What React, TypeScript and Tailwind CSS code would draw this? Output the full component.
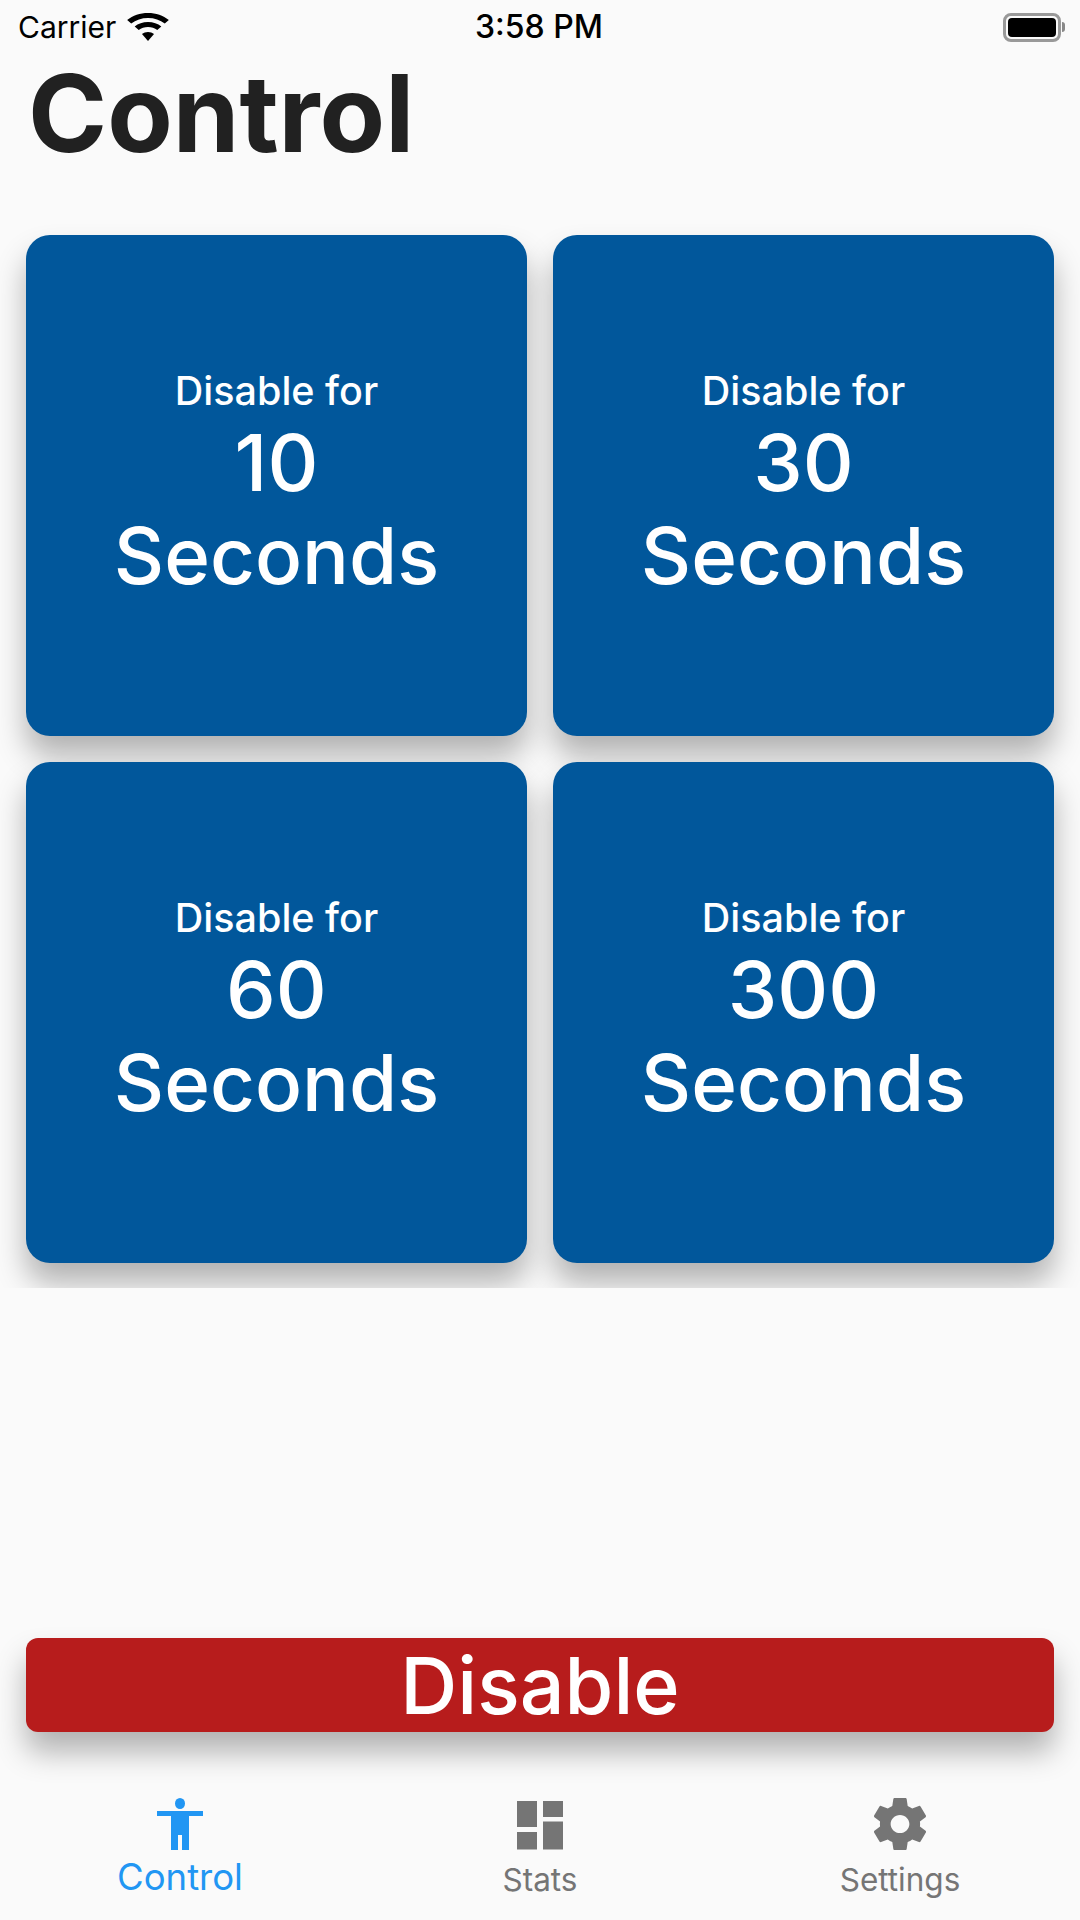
import React from 'react';

const durations = ['10', '30', '60', '300'];

function DisableCard({ value }: { value: string }) {
    return (
        <button className="flex aspect-square flex-col items-center justify-center rounded-[24px] bg-[#01579b] pb-[2px] text-white shadow-[0_20px_30px_rgba(0,0,0,0.29)]">
            <span className="text-[39.500px] leading-[48px] font-medium">Disable for</span>
            <span className="text-[79px] leading-[94px] font-medium">{value}</span>
            <span className="text-[78px] leading-[94px] font-medium">Seconds</span>
        </button>
    );
}

function WifiIcon() {
    return (
        <svg width="44" height="30" viewBox="0 0 38 30" preserveAspectRatio="none" fill="#000">
            <path d="M19 1C12 1 6 3.500 1 8l3.500 3.500C8.500 8 13.500 6 19 6s10.500 2 14.500 5.500L37 8C32 3.500 26 1 19 1z" />
            <path d="M19 10c-4.500 0-8.500 1.600-11.500 4.400L11 18c2.200-1.900 5-3 8-3s5.800 1.100 8 3l3.500-3.600C27.500 11.600 23.500 10 19 10z" />
            <path d="M19 20c-2 0-3.800.7-5.200 2L19 29l5.200-7c-1.400-1.300-3.200-2-5.200-2z" />
        </svg>
    );
}

function BatteryIcon() {
    return (
        <div className="flex items-center">
            <div className="h-[29px] w-[58px] rounded-[8px] border-[3px] border-[#999] bg-[#fafafa] p-[2px]">
                <div className="h-full w-full rounded-[4px] bg-black"></div>
            </div>
            <div className="ml-[1px] h-[10px] w-[3px] rounded-r-full bg-[#888]"></div>
        </div>
    );
}

function ControlIcon() {
    return (
        <svg width="48" height="54" viewBox="0 0 48 54" fill="#2196f3">
            <ellipse cx="24" cy="5.500" rx="5" ry="5.500" />
            <path d="M1 13h46v5H33v34h-7V37h-4v15h-7V18H1z" />
        </svg>
    );
}

function StatsIcon() {
    return (
        <svg width="48" height="50" viewBox="0 0 48 50" fill="#757575">
            <rect x="1" y="1" width="20" height="26" />
            <rect x="27" y="1" width="20" height="16" />
            <rect x="27" y="21.500" width="20" height="28" />
            <rect x="1" y="32" width="20" height="17.500" />
        </svg>
    );
}

function SettingsIcon() {
    return (
        <svg width="52" height="52" viewBox="2.300 2 19.400 20" preserveAspectRatio="none" fill="#757575">
            <path d="M19.430 12.980c.04-.32.07-.64.07-.98s-.03-.66-.07-.98l2.110-1.650c.19-.15.24-.42.12-.64l-2-3.460c-.12-.22-.39-.3-.61-.22l-2.490 1c-.52-.4-1.080-.73-1.690-.98l-.38-2.650C14.460 2.180 14.250 2 14 2h-4c-.25 0-.46.18-.49.42l-.38 2.650c-.61.25-1.170.59-1.690.98l-2.490-1c-.23-.09-.49 0-.61.22l-2 3.460c-.13.22-.07.49.12.64l2.110 1.650c-.04.32-.07.65-.07.98s.03.66.07.98l-2.110 1.650c-.19.15-.24.42-.12.64l2 3.460c.12.22.39.3.61.22l2.490-1c.52.4 1.080.73 1.690.98l.38 2.650c.03.24.24.42.49.42h4c.25 0 .46-.18.49-.42l.38-2.650c.61-.25 1.170-.59 1.690-.98l2.490 1c.23.09.49 0 .61-.22l2-3.460c.12-.22.07-.49-.12-.64l-2.110-1.650zM12 15.500c-1.930 0-3.500-1.570-3.500-3.500s1.570-3.500 3.500-3.500 3.500 1.570 3.500 3.500-1.570 3.500-3.500 3.500z" />
        </svg>
    );
}

export default function App() {
    return (
        <div className="flex h-[1920px] w-[1080px] flex-col overflow-hidden bg-[#fafafa] font-['Inter',sans-serif]">
            {/* status bar */}
            <div className="flex h-[54px] shrink-0 items-center justify-between pr-[15px] pl-[18px]">
                <div className="flex w-[300px] items-center gap-[10px]">
                    <span className="text-[30px] leading-none text-black">Carrier</span>
                    <WifiIcon />
                </div>
                <span className="mr-[5px] text-[32px] leading-none font-medium text-black">3:58 PM</span>
                <div className="flex w-[300px] justify-end">
                    <BatteryIcon />
                </div>
            </div>

            <h1 className="ml-[28px] h-[120px] shrink-0 pt-[1px] text-[107px] leading-[116px] font-bold text-[#212121]">Control</h1>

            {/* cards, the shadows get cut off where this section ends */}
            <div className="h-[1114px] shrink-0 overflow-hidden px-[26px] pt-[61px]">
                <div className="grid grid-cols-2 gap-[26px]">
                    {durations.map((d) => (
                        <DisableCard key={d} value={d} />
                    ))}
                </div>
            </div>

            <div className="flex-1"></div>

            <div className="px-[26px]">
                <button className="flex h-[94px] w-full items-center justify-center rounded-[12px] bg-[#b71c1c] text-[79px] font-medium text-white shadow-[0_20px_30px_rgba(0,0,0,0.29)]">
                    Disable
                </button>
            </div>

            {/* tab bar */}
            <div className="mt-[66px] grid h-[122px] shrink-0 grid-cols-3">
                <div className="flex flex-col items-center">
                    <ControlIcon />
                    <span className="mt-[1px] text-[36.500px] leading-[48px] text-[#2196f3]">Control</span>
                </div>
                <div className="flex flex-col items-center">
                    <div className="mt-[2px]">
                        <StatsIcon />
                    </div>
                    <span className="mt-[6px] text-[31.500px] leading-[48px] text-[#757575]">Stats</span>
                </div>
                <div className="flex flex-col items-center">
                    <SettingsIcon />
                    <span className="mt-[6px] text-[31.500px] leading-[48px] text-[#757575]">Settings</span>
                </div>
            </div>
        </div>
    );
}
